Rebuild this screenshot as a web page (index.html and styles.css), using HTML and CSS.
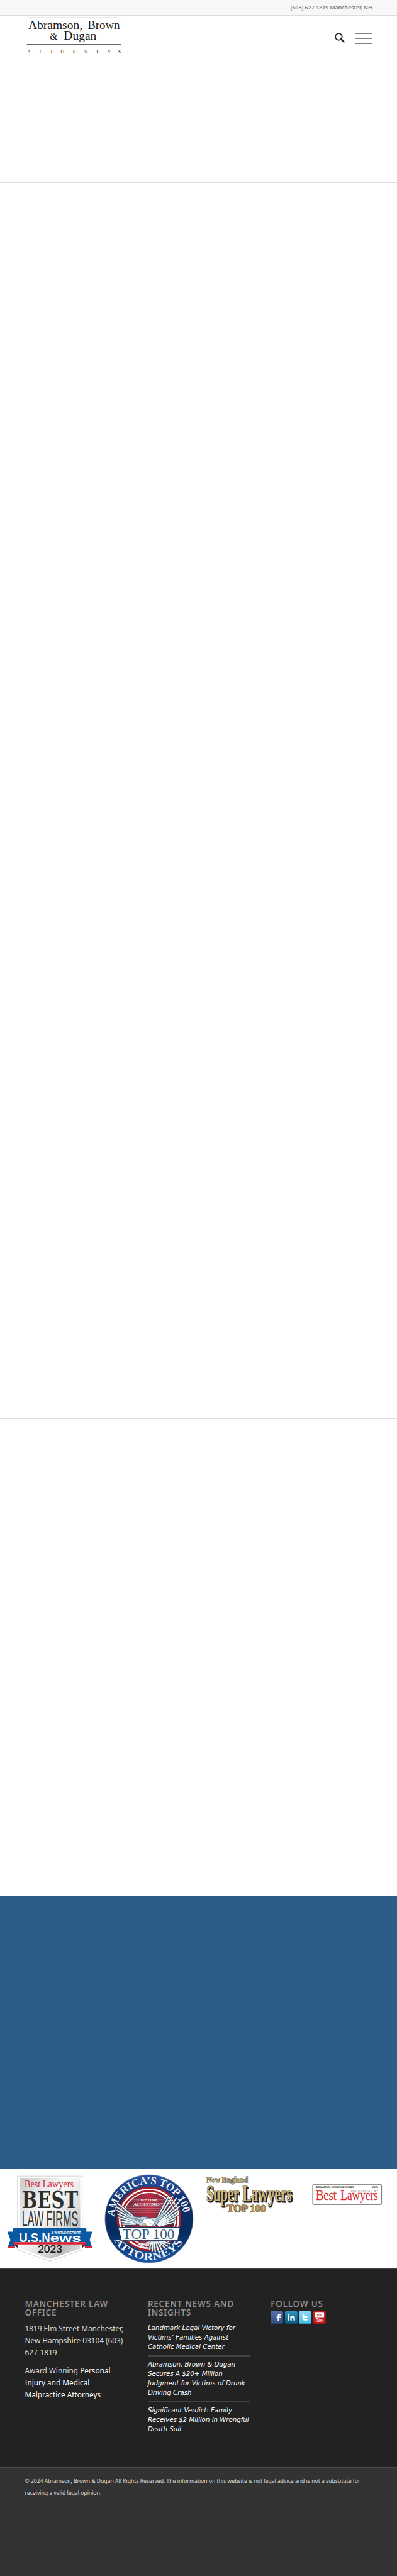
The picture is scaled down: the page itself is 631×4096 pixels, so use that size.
FILE: index.html
```html
<!DOCTYPE html>
<html lang="en">

<head>
    <meta charset="UTF-8">
    <meta name="viewport" content="width=device-width, initial-scale=1.0">
    <title>Abramson, Brown &amp; Dugan</title>
    <link rel="stylesheet" href="styles.css">
</head>

<body>
    <div class="topbar">(603) 627-1819 Manchester, NH</div>

    <header class="header">
        <svg class="logo" viewBox="150 93 590 270">
            <path d="M162 106H728M160 267H728" stroke="#222" stroke-width="3.5" />
            <g class="serif" fill="#1c1c1c">
                <text x="169" y="172" font-size="70" textLength="327" lengthAdjust="spacingAndGlyphs">Abramson,</text>
                <text x="527" y="172" font-size="70" textLength="195" lengthAdjust="spacingAndGlyphs">Brown</text>
                <text x="299" y="239" font-size="62" textLength="46" lengthAdjust="spacingAndGlyphs">&amp;</text>
                <text x="383" y="239" font-size="70" textLength="198" lengthAdjust="spacingAndGlyphs">Dugan</text>
                <text x="162 232 300 365 438 507 581 648 713" y="320" font-size="29">ATTORNEYS</text>
            </g>
        </svg>
        <div class="menu">
            <svg class="search" viewBox="0 0 20 20">
                <circle cx="8" cy="8" r="6.6" />
                <path d="M12.8 12.8L18 18" />
            </svg>
            <div class="burger"><span></span><span></span><span></span></div>
        </div>
    </header>

    <main>
        <section class="intro"></section>
        <section class="content"></section>
        <section class="more"></section>
        <section class="contact"></section>
        <section class="awards">
            <!-- Best Law Firms -->
            <svg viewBox="0 57 600 600">
                <defs>
                    <linearGradient id="silver" x1="0" y1="0" x2="1" y2="1">
                        <stop offset="0" stop-color="#c9c9c9" />
                        <stop offset=".4" stop-color="#fafafa" />
                        <stop offset=".65" stop-color="#dedede" />
                        <stop offset=".8" stop-color="#bdbdbd" />
                        <stop offset="1" stop-color="#e8e8e8" />
                    </linearGradient>
                </defs>
                <path d="M106 99H497V545L303 613L106 545Z" fill="#fff" stroke="#c4c4c4" stroke-width="3" />
                <path d="M118 110H485V538L303 599L118 538Z" fill="url(#silver)" />
                <text class="serif" x="148" y="165" font-size="61" fill="#d02c40" textLength="297" lengthAdjust="spacingAndGlyphs">Best Lawyers</text>
                <text class="slab" x="132" y="293" font-size="143" fill="#2d302f" textLength="340" lengthAdjust="spacingAndGlyphs">BEST</text>
                <text class="sans" x="132" y="401" font-size="133" fill="#2d302f" textLength="341" lengthAdjust="spacingAndGlyphs">LAW FIRMS</text>
                <path d="M45 435H90V532H45L63 484ZM513 435H558L542 484L558 532H513Z" fill="#0959a3" />
                <path d="M47 523H90V533H45ZM513 523H556L558 533H513Z" fill="#d7263a" />
                <path d="M82 511H106V534ZM497 511H521L497 534Z" fill="#3a2424" />
                <path d="M80 414H522V499H80Z" fill="#0959a3" />
                <path d="M82 499H521V512H82Z" fill="#e0202f" />
                <g class="sans bold" fill="#fff">
                    <text x="115" y="496" font-size="80" textLength="188" lengthAdjust="spacingAndGlyphs">U.S.N</text>
                    <text x="303" y="496" font-size="70" textLength="187" lengthAdjust="spacingAndGlyphs">ews</text>
                    <text x="309" y="447" font-size="18" textLength="179" lengthAdjust="spacingAndGlyphs">&amp; WORLD REPORT</text>
                </g>
                <text class="sans" x="229" y="564" font-size="61" fill="#111" stroke="#111" textLength="147" lengthAdjust="spacingAndGlyphs">2023</text>
            </svg>

            <!-- America's Top 100 seal -->
            <svg viewBox="0 57 600 600">
                <defs>
                    <linearGradient id="navy" x1="0" y1="0" x2="0" y2="1">
                        <stop offset="0" stop-color="#2a55a5" />
                        <stop offset=".3" stop-color="#102f68" />
                        <stop offset=".65" stop-color="#062b5c" />
                        <stop offset="1" stop-color="#1b56a8" />
                    </linearGradient>
                    <linearGradient id="wine">
                        <stop offset="0" stop-color="#61293c" />
                        <stop offset=".5" stop-color="#b62c43" />
                        <stop offset="1" stop-color="#512540" />
                    </linearGradient>
                    <path id="arcTop" d="M90 345A210 210 0 0 1 300 147A210 210 0 0 1 510 348" />
                    <path id="arcBottom" d="M88 487A249 249 0 0 0 512 487" />
                </defs>
                <circle cx="300" cy="357" r="266" fill="url(#navy)" stroke="#62789c" stroke-width="3" />
                <circle cx="300" cy="357" r="195" fill="#a51d27" />
                <circle cx="300" cy="357" r="178" fill="none" stroke="#fff" stroke-width="10" />
                <circle cx="300" cy="357" r="159" fill="url(#wine)" stroke="#fff" stroke-width="7" />
                <path d="M195 242H405M180 255H420M170 268H430M160 281H440M154 294H446M150 307H450M148 320H452" stroke="#d598a2" stroke-width="2" />
                <g class="serif bold" fill="#edf1f5">
                    <text font-size="66"><textPath href="#arcTop" textLength="612" lengthAdjust="spacingAndGlyphs">AMERICA’S TOP 100</textPath></text>
                    <text font-size="64"><textPath href="#arcBottom" textLength="492" lengthAdjust="spacingAndGlyphs">ATTORNEYS</textPath></text>
                    <text x="229" y="250" font-size="25" textLength="125" lengthAdjust="spacingAndGlyphs">L<tspan font-size="20">IFETIME</tspan></text>
                    <text x="205" y="279" font-size="25" textLength="181" lengthAdjust="spacingAndGlyphs">A<tspan font-size="20">CHIEVEMENT</tspan></text>
                </g>
                <path class="feather-edge" d="M245 375L108 262M240 376L102 284M235 378L104 305M230 380L108 327M225 383L114 348M222 386L124 370M220 390L138 390M330 390L421 216M338 390L443 219M345 391L467 231M348 392L481 256M350 394L486 281M352 396L484 306M354 398L476 331M356 400L464 355M358 402L450 378" />
                <path class="feather" d="M245 375L108 262M240 376L102 284M235 378L104 305M230 380L108 327M225 383L114 348M222 386L124 370M220 390L138 390M330 390L421 216M338 390L443 219M345 391L467 231M348 392L481 256M350 394L486 281M352 396L484 306M354 398L476 331M356 400L464 355M358 402L450 378" />
                <path d="M145 305Q185 347 245 347Q280 339 305 353Q355 355 394 313Q382 362 333 402H254Q193 380 145 305Z" fill="#c8dae2" stroke="#37596d" stroke-width="3" />
                <path d="M178 345L263 385M195 350L265 375M212 352L270 370M340 364L378 337M334 378L370 355M326 391L359 373" stroke="#436579" stroke-width="3" />
                <path d="M257 391Q256 357 291 354Q330 356 333 390L308 404L284 398L266 404Z" fill="#fff" stroke="#43677b" stroke-width="3" />
                <path d="M263 388L277 381L283 397L267 401ZM286 367L300 373M305 382L319 393" fill="#e1b968" stroke="#54727e" stroke-width="2" />
                <path d="M113 408H488L474 487H133Z" fill="#fafcfc" stroke="#143759" stroke-width="4" />
                <text class="serif" x="140" y="477" font-size="86" fill="#385d7c" textLength="314" lengthAdjust="spacingAndGlyphs">TOP 100</text>
                <path class="feather-edge" d="M315 495L301 546M323 495L319 557M331 495L338 559M341 495L358 555M350 495L378 548M359 495L399 537M368 495L415 524M374 493L427 507" />
                <path class="feather" d="M315 495L301 546M323 495L319 557M331 495L338 559M341 495L358 555M350 495L378 548M359 495L399 537M368 495L415 524M374 493L427 507" />
                <path d="M235 511L270 506L309 495M235 523L265 517L301 499M259 530L281 517L304 503M279 534L291 518L309 500" fill="none" stroke="#d6e2e9" stroke-width="5" />
            </svg>

            <!-- Super Lawyers -->
            <svg viewBox="0 57 600 600">
                <g class="serif bold">
                    <text class="gold" x="47" y="137" font-size="47" textLength="250" lengthAdjust="spacingAndGlyphs">New England</text>
                    <text class="gold shadow" x="46" y="250" font-size="133" textLength="197" lengthAdjust="spacingAndGlyphs">Super</text>
                    <text class="gold shadow" x="264" y="250" font-size="133" textLength="298" lengthAdjust="spacingAndGlyphs">Lawyers</text>
                    <text class="gold dark" x="169" y="316" font-size="64" textLength="235" lengthAdjust="spacingAndGlyphs">TOP 100</text>
                </g>
            </svg>

            <!-- Best Lawyers -->
            <svg viewBox="600 57 600 600">
                <rect x="691" y="149" width="417" height="122" rx="5" fill="#fff" stroke="#555" stroke-width="3" />
                <g class="sans" fill="#333">
                    <text x="709" y="171" font-size="15" stroke="#333" stroke-width=".5" textLength="230" lengthAdjust="spacingAndGlyphs">ABRAMSON, BROWN &amp; DUGAN</text>
                    <text x="1051" y="171" font-size="15" stroke="#333" stroke-width=".5" textLength="35" lengthAdjust="spacingAndGlyphs">2025</text>
                    <text x="923" y="197" font-size="15" fill="#666" textLength="163">RECOGNIZED BY</text>
                </g>
                <g class="serif" fill="#db3038" stroke="#db3038">
                    <text x="710" y="243" font-size="84" textLength="126" lengthAdjust="spacingAndGlyphs">Best</text>
                    <text x="860" y="243" font-size="84" textLength="226" lengthAdjust="spacingAndGlyphs">Lawyers</text>
                </g>
            </svg>
        </section>
    </main>

    <footer class="footer">
        <div class="column">
            <h3>Manchester Law Office</h3>
            <p>1819 Elm Street Manchester,<br>New Hampshire 03104 (603)<br>627-1819</p>
            <p>Award Winning <a>Personal<br>Injury</a> and <a>Medical<br>Malpractice Attorneys</a></p>
        </div>
        <div class="column">
            <h3>Recent News and Insights</h3>
            <ul class="news">
                <li>Landmark Legal Victory for<br>Victims’ Families Against<br>Catholic Medical Center</li>
                <li>Abramson, Brown &amp; Dugan<br>Secures A $20+ Million<br>Judgment for Victims of Drunk<br>Driving Crash</li>
                <li>Significant Verdict: Family<br>Receives $2 Million in Wrongful<br>Death Suit</li>
            </ul>
        </div>
        <div class="column follow">
            <h3>Follow Us</h3>
            <svg class="social" viewBox="45 165 333 75">
                <defs>
                    <linearGradient id="fb" x2="0" y2="1"><stop stop-color="#5570ad" /><stop offset="1" stop-color="#304c83" /></linearGradient>
                    <linearGradient id="li" x2="0" y2="1"><stop stop-color="#2d94bd" /><stop offset="1" stop-color="#075d88" /></linearGradient>
                    <linearGradient id="tw" x2="0" y2="1"><stop stop-color="#8cdcf4" /><stop offset="1" stop-color="#3dbfe9" /></linearGradient>
                </defs>
                <rect x="45" y="165" width="75" height="75" rx="7" fill="url(#fb)" />
                <path d="M88 225V207H81V197H88V192Q88 180 99 180H106V190H100Q98 190 98 194V197H106L105 207H98V225Z" fill="#fff" />
                <rect x="132" y="165" width="75" height="75" rx="7" fill="url(#li)" />
                <path d="M150 195H159V221H150ZM164 195H173V199Q177 194 183 194Q192 195 192 206V221H183V207Q183 202 178 202Q173 202 173 208V221H164Z" fill="#fff" />
                <circle cx="154.500" cy="186" r="5" fill="#fff" />
                <rect x="216" y="165" width="75" height="75" rx="7" fill="url(#tw)" />
                <path d="M243 187V206Q243 216 252 216H264" fill="none" stroke="#fff" stroke-width="10" stroke-linecap="round" />
                <path d="M243 199H263" stroke="#fff" stroke-width="9" stroke-linecap="round" />
                <rect x="303" y="165" width="75" height="75" rx="7" fill="#cb161c" />
                <rect x="312" y="174" width="57" height="27" rx="5" fill="#fff" />
                <g class="sans bold">
                    <text x="324" y="195" font-size="23" fill="#bd171c" textLength="31" lengthAdjust="spacingAndGlyphs">You</text>
                    <text x="322" y="230" font-size="31" fill="#fff" textLength="37" lengthAdjust="spacingAndGlyphs">Tube</text>
                </g>
            </svg>
        </div>
    </footer>

    <div class="copyright">© 2024 Abramson, Brown &amp; Dugan All Rights Reserved. The information on this website is not legal advice and is not a substitute for<br>receiving a valid legal opinion.</div>
</body>

</html>
```
FILE: styles.css
```css
* {
    box-sizing: border-box;
}

body {
    margin: 0;
    background: #fff;
    font-family: "Noto Sans", "Open Sans", sans-serif;
}

svg {
    display: block;
}

.topbar {
    height: 25px;
    padding-right: 39.5px;
    border-bottom: 1px solid #dcdcdc;
    background: #f7f7f7;
    color: #808080;
    font-size: 8.7px;
    font-weight: 600;
    line-height: 24px;
    text-align: right;
}

.header {
    display: flex;
    justify-content: space-between;
    height: 71px;
    padding: 0 39.5px;
    border-bottom: 1px solid #dcdcdc;
}

.logo {
    width: 155.2px;
    height: 71px;
}

.menu {
    display: flex;
    align-items: center;
    gap: 15.5px;
    padding-top: 2px;
}

.search {
    width: 16px;
    height: 16px;
    margin-bottom: 2px;
    fill: none;
    stroke: #2a2a2a;
    stroke-width: 2.4;
}

.search path {
    stroke-width: 3.4;
    stroke-linecap: round;
}

.burger {
    display: flex;
    flex-direction: column;
    gap: 6px;
    width: 27.6px;
}

.burger span {
    height: 2px;
    border-radius: 1px;
    background: #808080;
}

/* page sections */
.intro {
    height: 195px;
    border-bottom: 1px solid #dcdcdc;
}

.content {
    height: 1965px;
    border-bottom: 1px solid #dcdcdc;
}

.more {
    height: 759px;
}

.contact {
    height: 433.5px;
    background: #2d5c88;
}

.awards {
    display: grid;
    grid-template-columns: repeat(4, 1fr);
    height: 158px;
}

.awards svg {
    width: 100%;
    height: 158px;
}

.serif {
    font-family: "Liberation Serif", serif;
}

.slab {
    font-family: "DejaVu Serif", serif;
    font-weight: bold;
}

.sans {
    font-family: "Liberation Sans", sans-serif;
}

.bold {
    font-weight: bold;
}

.gold {
    fill: #ceb477;
    stroke: #3c3a35;
    stroke-width: 4;
    paint-order: stroke;
}

.shadow {
    filter: drop-shadow(7px 8px 0 #171717);
}

.dark {
    fill: #b89544;
}

.feather {
    fill: none;
    stroke: #edf4f5;
    stroke-width: 8;
}

.feather-edge {
    fill: none;
    stroke: #29465f;
    stroke-width: 13;
}

/* footer */
.footer {
    display: grid;
    grid-template-columns: repeat(3, 162.5px);
    gap: 32.9px;
    height: 316px;
    padding: 48.5px 0 0 39.5px;
    border-top: 1px solid #444;
    background: #222;
    color: #ddd;
    white-space: nowrap;
}

.footer h3 {
    margin: 0 0 10px;
    color: #919191;
    font-size: 13.4px;
    font-weight: 600;
    letter-spacing: 0.8px;
    line-height: 14.2px;
    text-transform: uppercase;
    white-space: normal;
}

.footer p {
    margin: -1px 0 10.5px;
    font-size: 11.8px;
    line-height: 18.93px;
}

.footer a {
    color: #fff;
}

.news {
    margin: 0;
    padding: 0;
    list-style: none;
    color: #fff;
    font-family: "DejaVu Sans", sans-serif;
    font-size: 10.26px;
    font-style: italic;
    line-height: 15px;
}

.news li {
    padding-bottom: 5.5px;
}

.news li + li {
    padding-top: 5.5px;
    border-top: 2.4px solid #444;
}

.footer .follow h3 {
    margin-bottom: 5px;
}

.social {
    width: 87.6px;
    height: 19.7px;
}

.copyright {
    height: 173.5px;
    padding: 12.5px 39.5px 0;
    border-top: 1px solid #484848;
    background: #333;
    color: #ddd;
    font-size: 8.6px;
    line-height: 18.93px;
    white-space: nowrap;
}
```
